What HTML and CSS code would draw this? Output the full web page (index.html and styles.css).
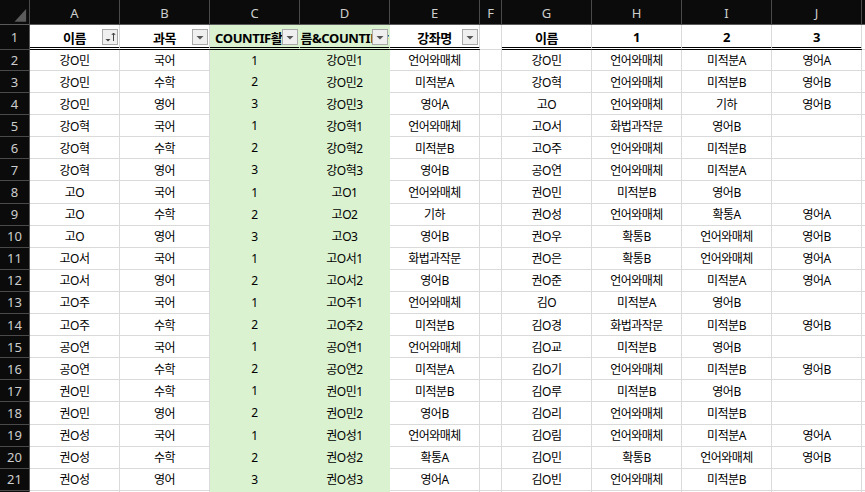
FILE: index.html
```html
<!DOCTYPE html>
<html lang="ko">
<head>
<meta charset="utf-8">
<link rel="stylesheet" href="styles.css">
</head>
<body>
<div class="sheet">
  <div class="corner"><svg width="30" height="25" viewBox="0 0 30 25"><polygon points="15,22 27,22 27,9" fill="#5b5b5b"/></svg></div>
  <div class="hd">A</div><div class="hd">B</div><div class="hd">C</div><div class="hd">D</div><div class="hd">E</div><div class="hd">F</div><div class="hd">G</div><div class="hd">H</div><div class="hd">I</div><div class="hd">J</div><div class="hd"></div>

  <div class="rh">1</div>
  <div class="cell top"><span class="t">이름</span><span class="btn"><svg width="14" height="14" viewBox="0 0 14 14"><polygon points="2.5,9 7.5,9 5,11.5" fill="#444"/><line x1="10.5" y1="3" x2="10.5" y2="11" stroke="#444" stroke-width="1"/><polyline points="8.8,5 10.5,3 12.2,5" fill="none" stroke="#444" stroke-width="1"/></svg></span></div>
  <div class="cell top"><span class="t">과목</span><span class="btn"><svg width="14" height="14" viewBox="0 0 14 14"><polygon points="3.5,6 10.5,6 7,9.5" fill="#555"/></svg></span></div>
  <div class="cell g top"><span class="t">COUNTIF활용</span><span class="btn"><svg width="14" height="14" viewBox="0 0 14 14"><polygon points="3.5,6 10.5,6 7,9.5" fill="#555"/></svg></span></div>
  <div class="cell g top"><span class="t">이름&amp;COUNTIF활용</span><span class="btn"><svg width="14" height="14" viewBox="0 0 14 14"><polygon points="3.5,6 10.5,6 7,9.5" fill="#555"/></svg></span></div>
  <div class="cell top"><span class="t">강좌명</span><span class="btn"><svg width="14" height="14" viewBox="0 0 14 14"><polygon points="3.5,6 10.5,6 7,9.5" fill="#555"/></svg></span></div>
  <div class="cell"></div>
  <div class="cell top"><span class="t">이름</span></div>
  <div class="cell top"><span class="t">1</span></div>
  <div class="cell top"><span class="t">2</span></div>
  <div class="cell top"><span class="t">3</span></div>
  <div class="cell"></div>

  <div class="rh">2</div><div class="cell">강O민</div><div class="cell">국어</div><div class="cell g">1</div><div class="cell g">강O민1</div><div class="cell">언어와매체</div><div class="cell"></div><div class="cell">강O민</div><div class="cell">언어와매체</div><div class="cell">미적분A</div><div class="cell">영어A</div><div class="cell"></div>
  <div class="rh">3</div><div class="cell">강O민</div><div class="cell">수학</div><div class="cell g">2</div><div class="cell g">강O민2</div><div class="cell">미적분A</div><div class="cell"></div><div class="cell">강O혁</div><div class="cell">언어와매체</div><div class="cell">미적분B</div><div class="cell">영어B</div><div class="cell"></div>
  <div class="rh">4</div><div class="cell">강O민</div><div class="cell">영어</div><div class="cell g">3</div><div class="cell g">강O민3</div><div class="cell">영어A</div><div class="cell"></div><div class="cell">고O</div><div class="cell">언어와매체</div><div class="cell">기하</div><div class="cell">영어B</div><div class="cell"></div>
  <div class="rh">5</div><div class="cell">강O혁</div><div class="cell">국어</div><div class="cell g">1</div><div class="cell g">강O혁1</div><div class="cell">언어와매체</div><div class="cell"></div><div class="cell">고O서</div><div class="cell">화법과작문</div><div class="cell">영어B</div><div class="cell"></div><div class="cell"></div>
  <div class="rh">6</div><div class="cell">강O혁</div><div class="cell">수학</div><div class="cell g">2</div><div class="cell g">강O혁2</div><div class="cell">미적분B</div><div class="cell"></div><div class="cell">고O주</div><div class="cell">언어와매체</div><div class="cell">미적분B</div><div class="cell"></div><div class="cell"></div>
  <div class="rh">7</div><div class="cell">강O혁</div><div class="cell">영어</div><div class="cell g">3</div><div class="cell g">강O혁3</div><div class="cell">영어B</div><div class="cell"></div><div class="cell">공O연</div><div class="cell">언어와매체</div><div class="cell">미적분A</div><div class="cell"></div><div class="cell"></div>
  <div class="rh">8</div><div class="cell">고O</div><div class="cell">국어</div><div class="cell g">1</div><div class="cell g">고O1</div><div class="cell">언어와매체</div><div class="cell"></div><div class="cell">권O민</div><div class="cell">미적분B</div><div class="cell">영어B</div><div class="cell"></div><div class="cell"></div>
  <div class="rh">9</div><div class="cell">고O</div><div class="cell">수학</div><div class="cell g">2</div><div class="cell g">고O2</div><div class="cell">기하</div><div class="cell"></div><div class="cell">권O성</div><div class="cell">언어와매체</div><div class="cell">확통A</div><div class="cell">영어A</div><div class="cell"></div>
  <div class="rh">10</div><div class="cell">고O</div><div class="cell">영어</div><div class="cell g">3</div><div class="cell g">고O3</div><div class="cell">영어B</div><div class="cell"></div><div class="cell">권O우</div><div class="cell">확통B</div><div class="cell">언어와매체</div><div class="cell">영어B</div><div class="cell"></div>
  <div class="rh">11</div><div class="cell">고O서</div><div class="cell">국어</div><div class="cell g">1</div><div class="cell g">고O서1</div><div class="cell">화법과작문</div><div class="cell"></div><div class="cell">권O은</div><div class="cell">확통B</div><div class="cell">언어와매체</div><div class="cell">영어A</div><div class="cell"></div>
  <div class="rh">12</div><div class="cell">고O서</div><div class="cell">영어</div><div class="cell g">2</div><div class="cell g">고O서2</div><div class="cell">영어B</div><div class="cell"></div><div class="cell">권O준</div><div class="cell">언어와매체</div><div class="cell">미적분A</div><div class="cell">영어A</div><div class="cell"></div>
  <div class="rh">13</div><div class="cell">고O주</div><div class="cell">국어</div><div class="cell g">1</div><div class="cell g">고O주1</div><div class="cell">언어와매체</div><div class="cell"></div><div class="cell">김O</div><div class="cell">미적분A</div><div class="cell">영어B</div><div class="cell"></div><div class="cell"></div>
  <div class="rh">14</div><div class="cell">고O주</div><div class="cell">수학</div><div class="cell g">2</div><div class="cell g">고O주2</div><div class="cell">미적분B</div><div class="cell"></div><div class="cell">김O경</div><div class="cell">화법과작문</div><div class="cell">미적분B</div><div class="cell">영어B</div><div class="cell"></div>
  <div class="rh">15</div><div class="cell">공O연</div><div class="cell">국어</div><div class="cell g">1</div><div class="cell g">공O연1</div><div class="cell">언어와매체</div><div class="cell"></div><div class="cell">김O교</div><div class="cell">미적분B</div><div class="cell">영어B</div><div class="cell"></div><div class="cell"></div>
  <div class="rh">16</div><div class="cell">공O연</div><div class="cell">수학</div><div class="cell g">2</div><div class="cell g">공O연2</div><div class="cell">미적분A</div><div class="cell"></div><div class="cell">김O기</div><div class="cell">언어와매체</div><div class="cell">미적분B</div><div class="cell">영어B</div><div class="cell"></div>
  <div class="rh">17</div><div class="cell">권O민</div><div class="cell">수학</div><div class="cell g">1</div><div class="cell g">권O민1</div><div class="cell">미적분B</div><div class="cell"></div><div class="cell">김O루</div><div class="cell">미적분B</div><div class="cell">영어B</div><div class="cell"></div><div class="cell"></div>
  <div class="rh">18</div><div class="cell">권O민</div><div class="cell">영어</div><div class="cell g">2</div><div class="cell g">권O민2</div><div class="cell">영어B</div><div class="cell"></div><div class="cell">김O리</div><div class="cell">언어와매체</div><div class="cell">미적분B</div><div class="cell"></div><div class="cell"></div>
  <div class="rh">19</div><div class="cell">권O성</div><div class="cell">국어</div><div class="cell g">1</div><div class="cell g">권O성1</div><div class="cell">언어와매체</div><div class="cell"></div><div class="cell">김O림</div><div class="cell">언어와매체</div><div class="cell">미적분A</div><div class="cell">영어A</div><div class="cell"></div>
  <div class="rh">20</div><div class="cell">권O성</div><div class="cell">수학</div><div class="cell g">2</div><div class="cell g">권O성2</div><div class="cell">확통A</div><div class="cell"></div><div class="cell">김O민</div><div class="cell">확통B</div><div class="cell">언어와매체</div><div class="cell">영어B</div><div class="cell"></div>
  <div class="rh">21</div><div class="cell">권O성</div><div class="cell">영어</div><div class="cell g">3</div><div class="cell g">권O성3</div><div class="cell">영어A</div><div class="cell"></div><div class="cell">김O빈</div><div class="cell">언어와매체</div><div class="cell">미적분B</div><div class="cell"></div><div class="cell"></div>
  <div class="rh"></div><div class="cell"></div><div class="cell"></div><div class="cell g"></div><div class="cell g"></div><div class="cell"></div><div class="cell"></div><div class="cell"></div><div class="cell"></div><div class="cell"></div><div class="cell"></div><div class="cell"></div>
</div>
</body>
</html>
```
FILE: styles.css
```css
html, body {
  margin: 0;
  padding: 0;
  background: #ffffff;
  overflow: hidden;
}

body {
  font-family: "Noto Sans", "Noto Sans CJK KR", sans-serif;
}

.sheet {
  display: grid;
  grid-template-columns: 30px repeat(5, 90px) 22px repeat(5, 90px);
  grid-template-rows: 25px 25px 21px repeat(19, 22.1px) 22px;
  width: max-content;
}

.corner,
.hd,
.rh {
  box-sizing: border-box;
  background: #0b0b0b;
  color: #cdcdcd;
  font-family: "Noto Sans", sans-serif;
  font-size: 13px;
  display: flex;
  align-items: center;
  justify-content: center;
}

.corner {
  border-right: 1px solid #4a4a4a;
  border-bottom: 1px solid #5a5a5a;
}

.corner svg {
  display: block;
}

.hd {
  border-right: 1px solid #4a4a4a;
  border-bottom: 1px solid #5a5a5a;
  padding-top: 1px;
}

.rh {
  border-bottom: 1px solid #4a4a4a;
  border-right: 1px solid #5a5a5a;
}

.cell {
  box-sizing: border-box;
  position: relative;
  display: flex;
  align-items: center;
  justify-content: center;
  border-right: 1px solid #dadada;
  border-bottom: 1px solid #dadada;
  font-family: "Noto Sans", "Noto Sans CJK KR", sans-serif;
  font-size: 12px;
  letter-spacing: -0.5px;
  color: #000000;
  white-space: nowrap;
  overflow: hidden;
}

.g {
  background: #daf2d0;
  border-color: #daf2d0;
}

.top {
  font-weight: bold;
  font-size: 13px;
  letter-spacing: -0.4px;
  border-bottom: 3px double #000000;
  padding-top: 2px;
}

.t {
  flex: none;
}

.btn {
  position: absolute;
  right: 1px;
  top: 4px;
  width: 16px;
  height: 16px;
  box-sizing: border-box;
  border: 1px solid #a9a9a9;
  background: #efefef;
  display: flex;
  align-items: center;
  justify-content: center;
}

.btn svg {
  display: block;
}
```
